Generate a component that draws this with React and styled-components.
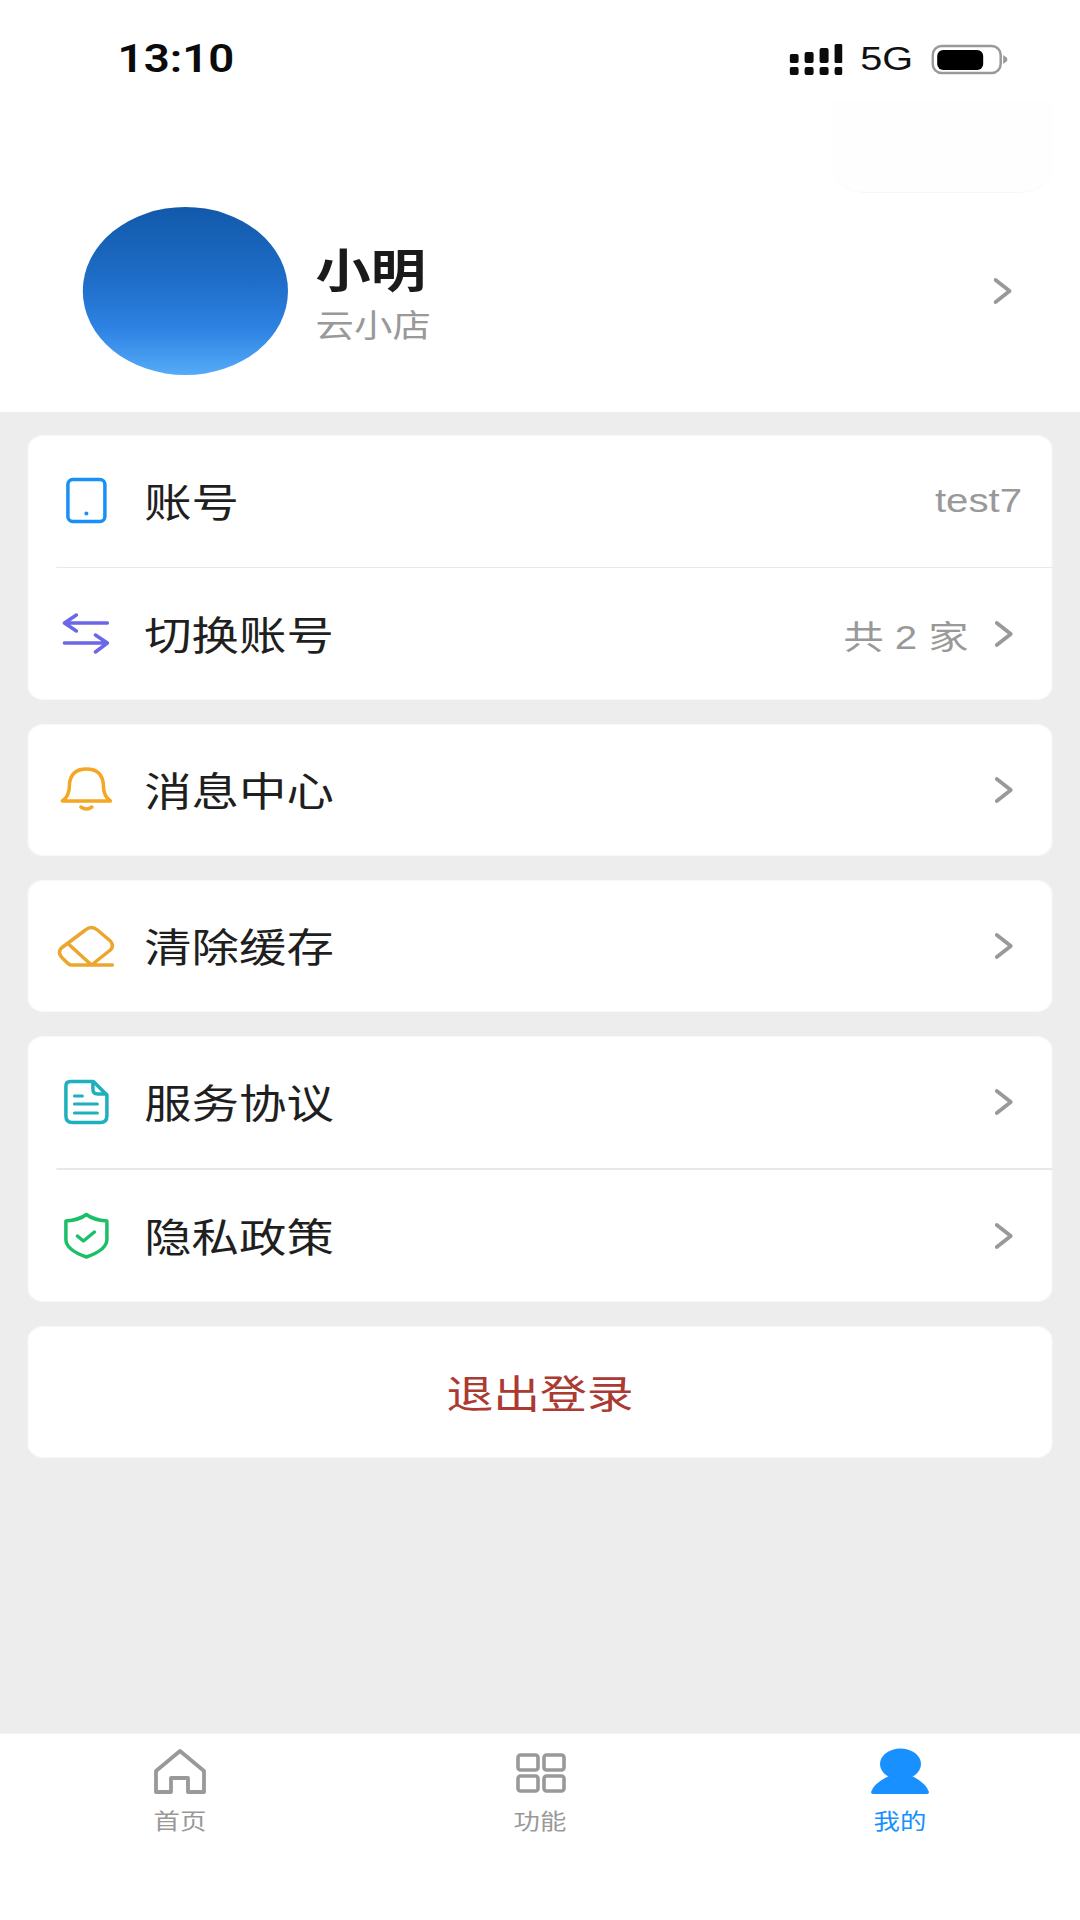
import React from 'react';
import styled, { createGlobalStyle } from 'styled-components';

// the whole screen is a 900px wide design stretched sideways to 1080
const STRETCH = 1.2;

const GlobalStyle = createGlobalStyle`
  html, body {
    margin: 0;
    padding: 0;
    background: #fff;
    overflow: hidden;
  }
  * {
    box-sizing: border-box;
  }
`;

const Screen = styled.div`
  width: 900px;
  height: 1920px;
  display: flex;
  flex-direction: column;
  background: #ededed;
  font-family: 'Liberation Sans', 'Noto Sans CJK SC', sans-serif;
  transform: scaleX(${STRETCH});
  transform-origin: left top;
`;

const Header = styled.header`
  position: relative;
  height: 412px;
  background: #fff;
`;

const StatusBar = styled.div`
  height: 118px;
  display: flex;
  align-items: center;
  justify-content: space-between;
  padding: 0 60px 0 98px;
`;

const Time = styled.span`
  font-family: Roboto, 'Liberation Sans', sans-serif;
  font-size: 38px;
  font-weight: 600;
  color: #0b0b0b;
`;

const StatusRight = styled.div`
  display: flex;
  align-items: center;
  gap: 15px;
`;

const Network = styled.span`
  font-size: 33px;
  color: #111;
`;

const GhostCard = styled.div`
  position: absolute;
  top: 100px;
  right: 22px;
  width: 185px;
  height: 93px;
  background: #fefefe;
  border-bottom: 1px solid #f7f7f7;
  border-radius: 0 0 28px 28px;
`;

const Profile = styled.div`
  display: flex;
  align-items: center;
  margin-top: 89px;
  padding: 0 56.7px 0 69px;
`;

const Avatar = styled.div`
  width: 171px;
  height: 168px;
  border-radius: 50%;
  background: linear-gradient(180deg, #1259aa 0%, #1f6ec9 45%, #2d82e2 72%, #55abf8 100%);
`;

const ProfileText = styled.div`
  display: flex;
  flex-direction: column;
  gap: 8px;
  margin-left: 23px;
  padding-top: 8px;
`;

const Name = styled.div`
  font-size: 46px;
  line-height: 54px;
  font-weight: 700;
  color: #1a1a1a;
`;

const Shop = styled.div`
  font-size: 32px;
  line-height: 40px;
  color: #999;
`;

const Main = styled.main`
  flex: 1;
  display: flex;
  flex-direction: column;
  gap: 24px;
  padding: 23px 23.3px 0;
`;

const Card = styled.section`
  background: #fff;
  border-radius: 14px;
  box-shadow: inset 0 0 0 1px #f8f8f8;
`;

const Row = styled.div`
  height: 132px;
  display: flex;
  align-items: center;
  padding: 0 25px 0 24.2px;
`;

const IconSlot = styled.div`
  width: 50px;
  height: 60px;
  flex: none;
  margin-right: 22.7px;
`;

const Label = styled.span`
  flex: 1;
  padding-bottom: 4px;
  font-size: 39.5px;
  color: #1f1f1f;
`;

const Value = styled.span`
  font-size: 33.5px;
  color: #999;
`;

const Divider = styled.div`
  height: ${(p) => (p.$thick ? 2 : 1)}px;
  margin-left: 23.3px;
  background: #e8e8e8;
`;

const Logout = styled.button`
  display: block;
  width: 100%;
  height: 132px;
  border: none;
  background: none;
  padding: 0 0 3px;
  font-family: inherit;
  font-size: 39px;
  color: #ab3a32;
`;

const TabBar = styled.nav`
  height: 187px;
  display: grid;
  grid-template-columns: repeat(3, 1fr);
  background: #fff;
  border-top: 1px solid #f3f3f3;
`;

const Tab = styled.div`
  display: flex;
  flex-direction: column;
  align-items: center;
  padding-top: 14px;
  color: ${(p) => (p.$active ? '#1890ff' : '#999')};
`;

const TabLabel = styled.span`
  margin-top: 11px;
  font-size: 22px;
  line-height: 30px;
`;

const ChevronSvg = styled.svg`
  display: block;
  flex: none;
  margin-left: ${(p) => p.$gap};
  margin-right: ${(p) => p.$inset}px;
`;

// icons are drawn in screen pixels, the svg undoes the page stretch
const Icon = ({ box, children }) => {
  const [x, y, w, h] = box;
  return (
    <svg
      viewBox={`${x} ${y} ${w} ${h}`}
      width={w / STRETCH}
      height={h}
      preserveAspectRatio="none"
      fill="none"
      strokeLinecap="round"
      strokeLinejoin="round"
      style={{ display: 'block' }}
    >
      {children}
    </svg>
  );
};

const Chevron = ({ gap = '22px', inset = 7.6 }) => (
  <ChevronSvg $gap={gap} $inset={inset} viewBox="0 0 18 26" width={15} height={26} preserveAspectRatio="none" fill="none">
    <path d="M2 2 L16 13 L2 24" stroke="#999" strokeWidth="3.8" strokeLinecap="round" strokeLinejoin="round" />
  </ChevronSvg>
);

const SignalIcon = () => (
  <Icon box={[790, 43, 53, 31]}>
    <g fill="#0b0b0b">
      <rect x="790" y="66" width="9" height="8" rx="2" />
      <rect x="805" y="66" width="9" height="8" rx="2" />
      <rect x="820" y="66" width="9" height="8" rx="2" />
      <rect x="835" y="66" width="8" height="8" rx="2" />
      <rect x="790" y="53" width="9" height="9" rx="2" />
      <rect x="805" y="51" width="9" height="11" rx="2" />
      <rect x="820" y="47" width="9" height="15" rx="2" />
      <rect x="835" y="43" width="8" height="19" rx="1.5" />
    </g>
  </Icon>
);

const BatteryIcon = () => (
  <Icon box={[931, 43, 77, 31]}>
    <rect x="932.5" y="45" width="68" height="27" rx="9" stroke="#999" strokeWidth="2.5" />
    <rect x="937" y="49" width="46" height="20" rx="6" fill="#000" />
    <path d="M1003 54 L1007 57 V60 L1003 63 Z" fill="#999" />
  </Icon>
);

const TabletIcon = () => (
  <Icon box={[57, 471, 60, 60]}>
    <rect x="68.5" y="479.5" width="37" height="42" rx="5" stroke="#1890f5" strokeWidth="3.5" />
    <circle cx="87" cy="513.5" r="2" fill="#1890f5" />
  </Icon>
);

const SwapIcon = () => (
  <Icon box={[57, 604, 60, 60]}>
    <path d="M65 623 H108 M65 623 L77 615 M65 623 L77 631 M65 643 H108 M108 643 L96 635 M108 643 L96 652" stroke="#6a67e8" strokeWidth="3.5" />
  </Icon>
);

const BellIcon = () => (
  <Icon box={[57, 760, 60, 60]}>
    <path
      d="M63 801 H111 Q104 796 104 786 V785 Q103 769 87 769 Q71 769 70 785 V786 Q70 796 63 801 Z"
      stroke="#f5a623"
      strokeWidth="3.5"
    />
    <path d="M81.500 807 Q87 811 92.500 807" stroke="#f5a623" strokeWidth="3.5" />
  </Icon>
);

const EraserIcon = () => (
  <Icon box={[57, 916, 60, 60]}>
    <path
      d="M86 930 Q92 925 98 930 L111 941 Q115 946 111 950 L92 965 H72 Q70 965 68 963 L62 957 Q58 952 62 948 Z M69 944 L91 964 M92 965 H113"
      stroke="#eda62d"
      strokeWidth="3.5"
    />
  </Icon>
);

const DocIcon = () => (
  <Icon box={[57, 1072, 60, 60]}>
    <path
      d="M71 1081.500 H94 L107.500 1095 V1116 Q107.500 1122.500 101 1122.500 H73 Q66.500 1122.500 66.500 1116 V1086 Q66.500 1081.500 71 1081.500 Z M93.500 1082 V1089 Q93.500 1094 98 1094 H107"
      stroke="#1fb0bd"
      strokeWidth="3.5"
    />
    <path d="M75 1096 H83 M75 1104 H98 M75 1113 H98" stroke="#1fb0bd" strokeWidth="3" />
  </Icon>
);

const ShieldIcon = () => (
  <Icon box={[57, 1206, 60, 60]}>
    <path
      d="M87 1214.500 Q94 1220 107.500 1221 V1240 Q107 1250 87 1257 Q67 1250 66.500 1240 V1221 Q80 1220 87 1214.500 Z"
      stroke="#1cbf68"
      strokeWidth="3.5"
    />
    <path d="M78 1236 L84 1241 L95 1232" stroke="#1cbf68" strokeWidth="3.5" />
  </Icon>
);

const HomeIcon = () => (
  <Icon box={[150, 1748, 60, 48]}>
    <path
      d="M156 1792 V1771 L180 1751 L204 1771 V1792 H188 V1778 H171 V1792 Z"
      stroke="#999"
      strokeWidth="3.800"
    />
  </Icon>
);

const GridIcon = () => (
  <Icon box={[510, 1748, 60, 48]}>
    <g stroke="#999" strokeWidth="3.600">
      <rect x="518" y="1755" width="20" height="15" rx="2.500" />
      <rect x="544" y="1755" width="20" height="15" rx="2.500" />
      <rect x="518" y="1776" width="20" height="15" rx="2.500" />
      <rect x="544" y="1776" width="20" height="15" rx="2.500" />
    </g>
  </Icon>
);

const PersonIcon = () => (
  <Icon box={[870, 1748, 60, 48]}>
    <ellipse cx="900.500" cy="1764" rx="20.500" ry="15.500" fill="#1890ff" />
    <path
      d="M871 1792 Q874 1783 889 1776 H912 Q926 1783 929 1792 Q929 1794 927 1794 H873 Q871 1794 871 1792 Z"
      fill="#1890ff"
    />
  </Icon>
);

const MenuRow = ({ icon, label, value, arrow = true }) => (
  <Row>
    <IconSlot>{icon}</IconSlot>
    <Label>{label}</Label>
    {value && <Value>{value}</Value>}
    {arrow && <Chevron />}
  </Row>
);

const App = () => (
  <Screen>
    <GlobalStyle />
    <Header>
      <StatusBar>
        <Time>13:10</Time>
        <StatusRight>
          <SignalIcon />
          <Network>5G</Network>
          <BatteryIcon />
        </StatusRight>
      </StatusBar>
      <GhostCard />
      <Profile>
        <Avatar />
        <ProfileText>
          <Name>小明</Name>
          <Shop>云小店</Shop>
        </ProfileText>
        <Chevron gap="auto" inset={0} />
      </Profile>
    </Header>

    <Main>
      <Card>
        <MenuRow icon={<TabletIcon />} label="账号" value="test7" arrow={false} />
        <Divider />
        <MenuRow icon={<SwapIcon />} label="切换账号" value="共 2 家" />
      </Card>
      <Card>
        <MenuRow icon={<BellIcon />} label="消息中心" />
      </Card>
      <Card>
        <MenuRow icon={<EraserIcon />} label="清除缓存" />
      </Card>
      <Card>
        <MenuRow icon={<DocIcon />} label="服务协议" />
        <Divider $thick />
        <MenuRow icon={<ShieldIcon />} label="隐私政策" />
      </Card>
      <Card>
        <Logout>退出登录</Logout>
      </Card>
    </Main>

    <TabBar>
      <Tab>
        <HomeIcon />
        <TabLabel>首页</TabLabel>
      </Tab>
      <Tab>
        <GridIcon />
        <TabLabel>功能</TabLabel>
      </Tab>
      <Tab $active>
        <PersonIcon />
        <TabLabel>我的</TabLabel>
      </Tab>
    </TabBar>
  </Screen>
);

export default App;
